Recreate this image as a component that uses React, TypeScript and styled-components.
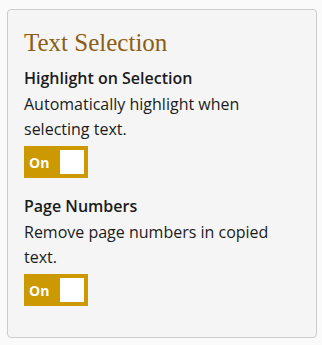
import React, { useState } from "react";
import styled, { createGlobalStyle } from "styled-components";

const Global = createGlobalStyle`
  html, body { margin: 0; padding: 0; background: #fafafa; }
  body { font-family: "Open Sans", "Noto Sans", sans-serif; color: #1b1b1b; }
`;

const Page = styled.div`
  padding: 9px 5px 7px 7px;
`;

const Panel = styled.section`
  background: #f5f5f5;
  border: 1px solid #cccccc;
  border-radius: 4px;
  padding: 18px 16px 31px 16px;
`;

const Title = styled.h2`
  margin: 0 0 8px 0;
  font-family: "Liberation Serif", "DejaVu Serif", serif;
  font-weight: normal;
  font-size: 25px;
  line-height: 30px;
  color: #8c5e14;
`;

const Setting = styled.div<{ $first?: boolean }>`
  margin-top: ${(p) => (p.$first ? "0" : "16px")};
`;

const Label = styled.div`
  font-weight: 600;
  font-size: 16px;
  line-height: 24px;
  margin-bottom: 2px;
`;

const Desc = styled.div`
  font-size: 16px;
  line-height: 24.5px;
`;

const Toggle = styled.button<{ $on: boolean }>`
  display: flex;
  align-items: center;
  justify-content: space-between;
  width: 64px;
  height: 32px;
  margin-top: 5px;
  padding: 0 4px 0 5px;
  border: none;
  background: ${(p) => (p.$on ? "#cc9900" : "#999999")};
  cursor: pointer;
  font-family: "Open Sans", "Noto Sans", sans-serif;
  font-weight: 700;
  font-size: 14px;
  color: #ffffff;
`;

const Knob = styled.span`
  width: 24px;
  height: 24px;
  background: #ffffff;
`;

export default function App() {
  const [a, setA] = useState(true);
  const [b, setB] = useState(true);
  return (
    <>
      <Global />
      <Page>
        <Panel>
          <Title>Text Selection</Title>
          <Setting $first>
            <Label>Highlight on Selection</Label>
            <Desc>Automatically highlight when selecting text.</Desc>
            <Toggle $on={a} onClick={() => setA(!a)}>
              <span>{a ? "On" : "Off"}</span>
              <Knob />
            </Toggle>
          </Setting>
          <Setting>
            <Label>Page Numbers</Label>
            <Desc>Remove page numbers in copied text.</Desc>
            <Toggle $on={b} onClick={() => setB(!b)}>
              <span>{b ? "On" : "Off"}</span>
              <Knob />
            </Toggle>
          </Setting>
        </Panel>
      </Page>
    </>
  );
}
